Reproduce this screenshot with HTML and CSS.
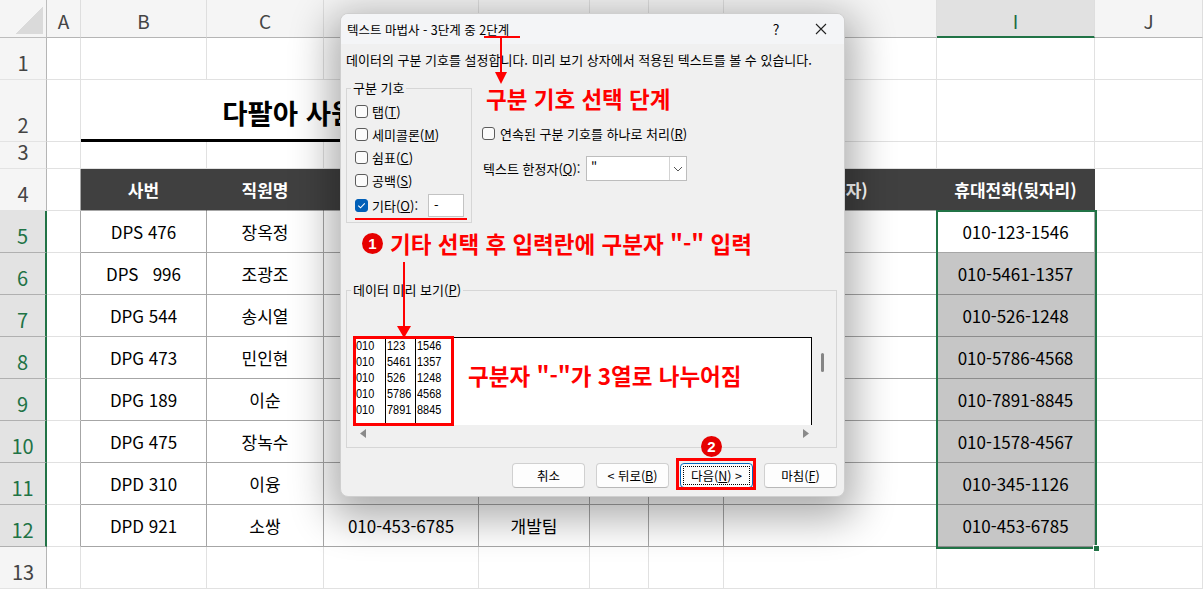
FILE: index.html
```html
<!DOCTYPE html>
<html lang="ko">
<head>
<meta charset="utf-8">
<title>텍스트 마법사 - 3단계 중 2단계</title>
<link rel="stylesheet" href="styles.css">
</head>
<body>
<div class="page">
  <div class="sheet">
    <!-- column header row -->
    <div class="corner"><span class="tri"></span></div>
    <div class="ch">A</div><div class="ch">B</div><div class="ch">C</div><div class="ch">D</div><div class="ch">E</div><div class="ch">F</div><div class="ch">G</div><div class="ch">H</div><div class="ch csel">I</div><div class="ch">J</div>

    <!-- row 1 -->
    <div class="rh">1</div><div class="c"></div><div class="c"></div><div class="c"></div><div class="c"></div><div class="c"></div><div class="c"></div><div class="c"></div><div class="c"></div><div class="c"></div><div class="c"></div>

    <!-- row 2 -->
    <div class="rh">2</div><div class="c"></div><div class="c title">다팔아 사원 휴대전화 번호 관리</div><div class="c"></div><div class="c"></div><div class="c"></div>

    <!-- row 3 -->
    <div class="rh">3</div><div class="c"></div><div class="c"></div><div class="c"></div><div class="c"></div><div class="c"></div><div class="c"></div><div class="c"></div><div class="c"></div><div class="c"></div><div class="c"></div>

    <!-- row 4 header -->
    <div class="rh">4</div><div class="c tl"></div><div class="c hd">사번</div><div class="c hd">직원명</div><div class="c hd">연락처</div><div class="c hd">부서</div><div class="c hd"></div><div class="c hd"></div><div class="c hd">사번(숫자)</div><div class="c hd">휴대전화(뒷자리)</div><div class="c"></div>

    <!-- row 5 -->
    <div class="rh rsel">5</div><div class="c tl"></div><div class="c t">DPS 476</div><div class="c t">장옥정</div><div class="c t">010-123-1546</div><div class="c t">영업팀</div><div class="c t"></div><div class="c t"></div><div class="c t"></div><div class="c t act">010-123-1546</div><div class="c"></div>
    <!-- row 6 -->
    <div class="rh rsel">6</div><div class="c tl"></div><div class="c t pre">DPS   996</div><div class="c t">조광조</div><div class="c t">010-5461-1357</div><div class="c t">기획팀</div><div class="c t"></div><div class="c t"></div><div class="c t"></div><div class="c t isel">010-5461-1357</div><div class="c"></div>
    <!-- row 7 -->
    <div class="rh rsel">7</div><div class="c tl"></div><div class="c t">DPG 544</div><div class="c t">송시열</div><div class="c t">010-526-1248</div><div class="c t">개발팀</div><div class="c t"></div><div class="c t"></div><div class="c t"></div><div class="c t isel">010-526-1248</div><div class="c"></div>
    <!-- row 8 -->
    <div class="rh rsel">8</div><div class="c tl"></div><div class="c t">DPG 473</div><div class="c t">민인현</div><div class="c t">010-5786-4568</div><div class="c t">개발팀</div><div class="c t"></div><div class="c t"></div><div class="c t"></div><div class="c t isel">010-5786-4568</div><div class="c"></div>
    <!-- row 9 -->
    <div class="rh rsel">9</div><div class="c tl"></div><div class="c t">DPG 189</div><div class="c t">이순</div><div class="c t">010-7891-8845</div><div class="c t">개발팀</div><div class="c t"></div><div class="c t"></div><div class="c t"></div><div class="c t isel">010-7891-8845</div><div class="c"></div>
    <!-- row 10 -->
    <div class="rh rsel">10</div><div class="c tl"></div><div class="c t">DPG 475</div><div class="c t">장녹수</div><div class="c t">010-1578-4567</div><div class="c t">개발팀</div><div class="c t"></div><div class="c t"></div><div class="c t"></div><div class="c t isel">010-1578-4567</div><div class="c"></div>
    <!-- row 11 -->
    <div class="rh rsel">11</div><div class="c tl"></div><div class="c t">DPD 310</div><div class="c t">이융</div><div class="c t">010-345-1126</div><div class="c t">개발팀</div><div class="c t"></div><div class="c t"></div><div class="c t"></div><div class="c t isel">010-345-1126</div><div class="c"></div>
    <!-- row 12 -->
    <div class="rh rsel">12</div><div class="c tl"></div><div class="c t">DPD 921</div><div class="c t">소쌍</div><div class="c t">010-453-6785</div><div class="c t">개발팀</div><div class="c t"></div><div class="c t"></div><div class="c t"></div><div class="c t isel">010-453-6785</div><div class="c"></div>
    <!-- row 13 -->
    <div class="rh">13</div><div class="c"></div><div class="c"></div><div class="c"></div><div class="c"></div><div class="c"></div><div class="c"></div><div class="c"></div><div class="c"></div><div class="c"></div><div class="c"></div>
  </div>

  <!-- selection outline over I5:I12 -->
  <div class="selbox"></div>
  <div class="handle"></div>

  <!-- Text wizard dialog -->
  <div class="dialog">
    <div class="dlg-title">
      <span class="caption">텍스트 마법사 - 3단계 중 2단계</span>
      <span class="help">?</span>
      <span class="close"><svg width="12" height="12" viewBox="0 0 12 12"><path d="M1 1 L11 11 M11 1 L1 11" stroke="#222" stroke-width="1.1" fill="none"/></svg></span>
    </div>
    <div class="dlg-body">
      <p class="desc">데이터의 구분 기호를 설정합니다. 미리 보기 상자에서 적용된 텍스트를 볼 수 있습니다.</p>
      <div class="opts">
        <fieldset class="delims">
          <legend>구분 기호</legend>
          <div class="chk-list">
            <div class="chk"><span class="box"></span><span>탭(<u>T</u>)</span></div>
            <div class="chk"><span class="box"></span><span>세미콜론(<u>M</u>)</span></div>
            <div class="chk"><span class="box"></span><span>쉼표(<u>C</u>)</span></div>
            <div class="chk"><span class="box"></span><span>공백(<u>S</u>)</span></div>
            <div class="chk"><span class="box on"><svg width="11" height="11" viewBox="0 0 11 11"><path d="M2.3 5.6 L4.5 7.8 L8.8 3.4" stroke="#fff" stroke-width="1.1" fill="none"/></svg></span><span>기타(<u>O</u>):</span><span class="other">-</span></div>
          </div>
        </fieldset>
        <div class="right-opts">
          <div class="chk"><span class="box"></span><span>연속된 구분 기호를 하나로 처리(<u>R</u>)</span></div>
          <div class="qual">
            <span class="qual-label">텍스트 한정자(<u>Q</u>):</span>
            <div class="combo">
              <span class="combo-val">"</span>
              <span class="combo-btn"><svg width="10" height="6" viewBox="0 0 10 6"><path d="M1 1 L5 5 L9 1" stroke="#555" stroke-width="1" fill="none"/></svg></span>
            </div>
          </div>
        </div>
      </div>
      <fieldset class="pv-group">
        <legend>데이터 미리 보기(<u>P</u>)</legend>
        <div class="pv-inner">
          <div class="pv-wrap">
            <div class="pv">
              <div class="pv-col c1"><div class="pv-txt"><div>010</div><div>010</div><div>010</div><div>010</div><div>010</div></div></div>
              <div class="pv-col c2"><div class="pv-txt"><div>123</div><div>5461</div><div>526</div><div>5786</div><div>7891</div></div></div>
              <div class="pv-col c3"><div class="pv-txt"><div>1546</div><div>1357</div><div>1248</div><div>4568</div><div>8845</div></div></div>
            </div>
            <div class="vscroll"><span class="thumb"></span></div>
          </div>
          <div class="hscroll">
            <svg width="6" height="9" viewBox="0 0 6 9"><path d="M6 0 L0 4.5 L6 9 Z" fill="#8a8a8a"/></svg>
            <svg width="6" height="9" viewBox="0 0 6 9"><path d="M0 0 L6 4.5 L0 9 Z" fill="#8a8a8a"/></svg>
          </div>
        </div>
      </fieldset>
      <div class="buttons">
        <div class="btn">취소</div>
        <div class="btn">&lt; 뒤로(<u>B</u>)</div>
        <div class="btn focus"><span class="ring">다음(<u>N</u>) &gt;</span></div>
        <div class="btn">마침(<u>F</u>)</div>
      </div>
    </div>
  </div>

  <!-- red annotations -->
  <svg class="marks" width="1203" height="589" viewBox="0 0 1203 589">
    <line x1="484" y1="37" x2="520" y2="37" stroke="#f00" stroke-width="2"/>
    <line x1="501" y1="37" x2="501" y2="73" stroke="#f00" stroke-width="2"/>
    <polygon points="495,72 507,72 501,84" fill="#f00"/>
    <line x1="355" y1="219" x2="467" y2="219" stroke="#f00" stroke-width="2"/>
    <line x1="404" y1="262" x2="404" y2="328" stroke="#f00" stroke-width="2"/>
    <polygon points="397,326 411,326 404,338" fill="#f00"/>
    <rect x="354.5" y="337.5" width="98" height="87" fill="none" stroke="#f00" stroke-width="3"/>
    <rect x="677.5" y="459.5" width="77" height="29" fill="none" stroke="#f00" stroke-width="3"/>
  </svg>
  <div class="ann ann1">구분 기호 선택 단계</div>
  <div class="num n1">1</div>
  <div class="ann ann2">기타 선택 후 입력란에 구분자 "-" 입력</div>
  <div class="ann ann3">구분자 "-"가 3열로 나누어짐</div>
  <div class="num n2">2</div>
</div>
</body>
</html>
```

FILE: styles.css
```css
* { box-sizing: border-box; }
html, body { margin: 0; padding: 0; background: #fff; }
body { font-family: "Noto Sans CJK KR", "Noto Sans", sans-serif; }

.page {
  position: relative;
  width: 1203px;
  height: 589px;
  overflow: hidden;
  background: #fff;
}

/* ---------- spreadsheet ---------- */
.sheet {
  display: grid;
  grid-template-columns: 47px 34px 126px 117px 155px 111px 59px 75px 213px 158px 108px;
  grid-template-rows: 38px 42px 62px 27px repeat(10, 42px);
  font-size: 17px;
  color: #000;
}

.c {
  border-right: 1px solid #e1e1e1;
  border-bottom: 1px solid #e1e1e1;
  display: flex;
  align-items: center;
  justify-content: center;
  white-space: nowrap;
  overflow: hidden;
}
.pre { white-space: pre; }

.corner {
  background: #f5f5f5;
  border-right: 1px solid #bdbdbd;
  border-bottom: 1px solid #bdbdbd;
  display: flex;
  align-items: flex-end;
  justify-content: flex-end;
  padding: 0 3px 3px 0;
}
.tri {
  width: 27px;
  height: 27px;
  background: linear-gradient(to bottom right, transparent 50%, #dadada 50%);
}

.ch {
  background: #f5f5f5;
  color: #444;
  font-size: 19px;
  border-right: 1px solid #dedede;
  border-bottom: 1px solid #b5b5b5;
  display: flex;
  align-items: center;
  justify-content: center;
  padding-top: 4px;
}
.ch.csel {
  background: #e1e1e1;
  color: #1d6b40;
  border-bottom: 2px solid #217346;
}

.rh {
  background: #f5f5f5;
  color: #444;
  font-size: 20px;
  line-height: 24px;
  border-right: 1px solid #b5b5b5;
  border-bottom: 1px solid #e3e3e3;
  display: flex;
  align-items: flex-end;
  justify-content: center;
  padding-bottom: 4px;
}
.rh.rsel {
  background: #e3e3e3;
  color: #217346;
  border-right: 2px solid #217346;
  border-bottom: 1px solid #b0b0b0;
}

.title {
  grid-column: span 6;
  border-bottom: 3px solid #000;
  align-items: flex-end;
  padding-bottom: 12px;
  font-size: 27.5px;
  line-height: 30px;
  font-weight: 700;
  overflow: visible;
}

.tl { border-right: 1px solid #a6a6a6; }
.t {
  border-right: 1px solid #a6a6a6;
  border-bottom: 1px solid #a6a6a6;
}
.hd {
  background: #404040;
  color: #fff;
  font-weight: 700;
  border-right: 1px solid #404040;
  border-bottom: 1px solid #a6a6a6;
}
.act { background: #fff; }
.isel {
  background: #c6c6c6;
  border-bottom: 1px solid #8c8c8c;
}

.selbox {
  position: absolute;
  left: 936px;
  top: 210px;
  width: 161px;
  height: 339px;
  border: 2px solid #217346;
  pointer-events: none;
}
.handle {
  position: absolute;
  left: 1093px;
  top: 545px;
  width: 7px;
  height: 7px;
  background: #217346;
  border: 1px solid #fff;
}

/* ---------- dialog ---------- */
.dialog {
  position: absolute;
  left: 340px;
  top: 13px;
  width: 505px;
  height: 484px;
  background: #f0f0f0;
  border: 1px solid #cfcfcf;
  border-radius: 8px;
  box-shadow: 0 12px 40px 10px rgba(0, 0, 0, 0.32);
  font-size: 13px;
  color: #000;
  overflow: hidden;
}

.dlg-title {
  display: flex;
  align-items: center;
  height: 30px;
  padding-left: 6px;
  padding-right: 13px;
  background: #f4f5f7;
  font-size: 12.5px;
}
.caption { flex: 1; }
.help {
  width: 20px;
  text-align: center;
  font-size: 14px;
  margin-right: 25px;
}
.close {
  width: 20px;
  display: flex;
  justify-content: center;
}

.dlg-body {
  padding: 0 7px 0 5px;
}
.desc {
  margin: 8px 0 0 0;
  line-height: 16px;
  white-space: nowrap;
}

.opts {
  display: flex;
  margin-top: 12px;
  height: 143px;
}

fieldset {
  margin: 0;
  padding: 0;
  min-width: 0;
  border: 1px solid #d6d6d6;
}
legend {
  padding: 0 2px;
  margin-left: 4px;
  line-height: 16px;
}

.delims {
  width: 126px;
  height: 143px;
}
.chk-list {
  padding: 4px 7px 0 8px;
}
.chk {
  display: flex;
  align-items: center;
  height: 23px;
  gap: 4px;
  white-space: nowrap;
}
.box {
  width: 13px;
  height: 13px;
  flex: none;
  border: 1px solid #5c5c5c;
  border-radius: 3px;
  background: #fbfbfb;
  display: flex;
  align-items: center;
  justify-content: center;
}
.box.on {
  background: #005fb8;
  border-color: #005fb8;
}
.other {
  margin-left: auto;
  width: 36px;
  height: 23px;
  background: #fff;
  border: 1px solid #c3c3c3;
  padding-left: 5px;
  line-height: 20px;
}
.chk-list .chk:last-child { height: 26px; }

.right-opts {
  margin-left: 10px;
  padding-top: 42px;
}
.right-opts .chk { gap: 5px; }
.qual {
  display: flex;
  align-items: center;
  margin-top: 11px;
}
.qual-label {
  width: 104px;
  padding-left: 1px;
  white-space: nowrap;
}
.combo {
  width: 101px;
  height: 25px;
  background: #fff;
  border: 1px solid #bdbdbd;
  display: flex;
}
.combo-val {
  flex: 1;
  padding-left: 4px;
  line-height: 22px;
}
.combo-btn {
  width: 17px;
  border-left: 1px solid #d3d3d3;
  display: flex;
  align-items: center;
  justify-content: center;
}

.pv-group {
  margin-top: 59px;
  height: 166px;
}
.pv-inner {
  padding: 39px 0 0 6px;
}
.pv-wrap {
  display: flex;
  height: 88px;
}
.pv {
  width: 459px;
  background: #fff;
  border: 1px solid #000;
  border-bottom: none;
  display: flex;
  font-family: "Liberation Sans", Arial, sans-serif;
  font-size: 13px;
  line-height: 16px;
}
.pv-col {
  border-right: 1px solid #000;
  overflow: hidden;
}
.pv-col.c1 { width: 32px; padding-left: 2px; }
.pv-col.c2 { width: 30px; padding-left: 1px; }
.pv-col.c3 { border-right: none; padding-left: 1px; }
.pv-txt {
  transform: scaleX(0.84);
  transform-origin: left top;
  white-space: nowrap;
}
.pv-txt div { height: 16px; }
.vscroll {
  width: 24px;
  padding: 16px 0 0 9px;
}
.thumb {
  display: block;
  width: 3px;
  height: 19px;
  background: #858585;
  border-radius: 2px;
}
.hscroll {
  width: 459px;
  height: 17px;
  display: flex;
  align-items: center;
  justify-content: space-between;
  padding: 0 3px 0 7px;
}

.buttons {
  display: flex;
  justify-content: flex-end;
  gap: 11px;
  margin-top: 15px;
}
.btn {
  width: 73px;
  height: 25px;
  background: #fdfdfd;
  border: 1px solid #d0d0d0;
  border-bottom-color: #b8b8b8;
  border-radius: 4px;
  display: flex;
  align-items: center;
  justify-content: center;
  white-space: nowrap;
  font-size: 12.5px;
}
.btn.focus {
  border: 1px solid #0067c0;
  padding: 2px;
}
.ring {
  flex: 1;
  align-self: stretch;
  border: 1px dotted #000;
  display: flex;
  align-items: center;
  justify-content: center;
}

/* ---------- annotations ---------- */
.marks {
  position: absolute;
  left: 0;
  top: 0;
  pointer-events: none;
}
.ann {
  position: absolute;
  color: #f00;
  font-weight: 700;
  white-space: nowrap;
  line-height: 1;
  font-size: 22.5px;
}
.ann1 { left: 486px; top: 87px; }
.ann2 { left: 390px; top: 232px; }
.ann3 { left: 468px; top: 364px; }

.num {
  position: absolute;
  width: 21px;
  height: 21px;
  border-radius: 50%;
  background: #e60000;
  color: #fff;
  font-family: "Liberation Sans", Arial, sans-serif;
  font-weight: 700;
  font-size: 15px;
  display: flex;
  align-items: center;
  justify-content: center;
}
.n1 { left: 362px; top: 233px; }
.n2 { left: 701px; top: 436px; }
```
